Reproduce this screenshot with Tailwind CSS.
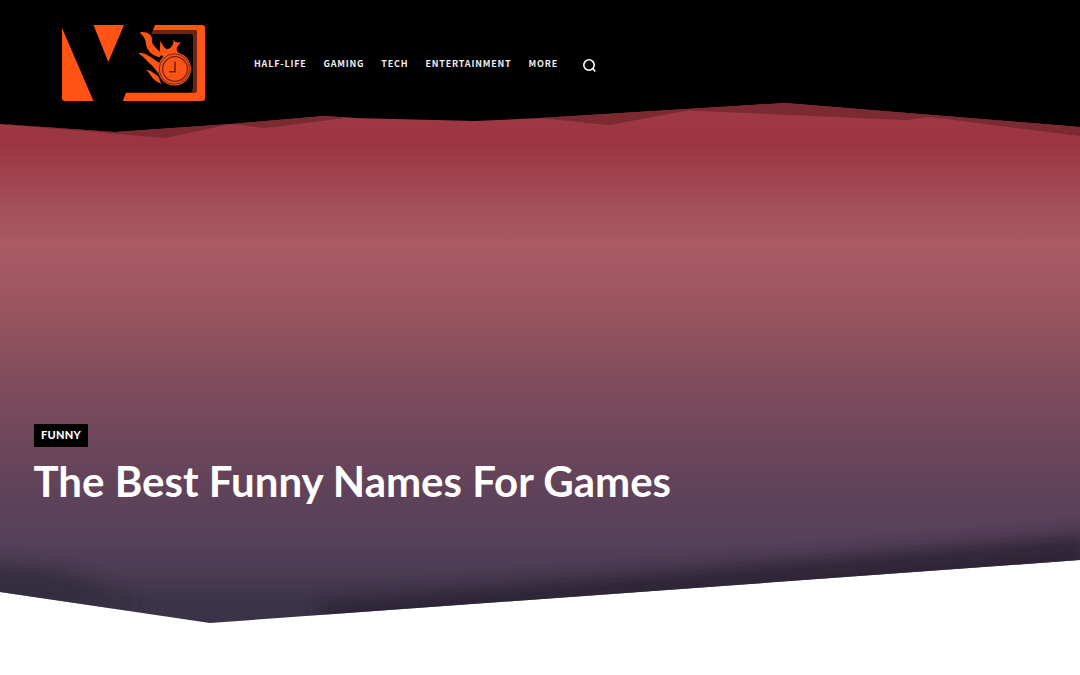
<!DOCTYPE html>
<html lang="en">
  <head>
    <meta charset="UTF-8" />
    <meta name="viewport" content="width=device-width, initial-scale=1.0" />
    <title>The Best Funny Names For Games</title>
    <script src="https://cdn.jsdelivr.net/npm/@tailwindcss/browser@4"></script>
  </head>

  <body class="bg-white h-[675px] overflow-hidden font-['Lato',sans-serif]">
    <!-- header -->
    <header class="bg-black h-[100px] flex items-start pl-[61px]">
      <a href="#" class="block mt-[25px] w-[144px] h-[76px] shrink-0 relative z-10">
        <svg viewBox="61 25 144 76" width="144" height="76">
          <path d="M62 28 L93.5 101 H65 Q62 101 62 98 Z" fill="#ff5416" />
          <path d="M93.5 25 H124 L108.3 62 Z" fill="#ff5416" />
          <path d="M155 25 H202 Q205 25 205 28 V98 Q205 101 202 101 H122.7 L126 92.7 H194 Q197 92.7 197 89 V33 Q197 30 194 30 H153 Z" fill="#ff5416" />
          <path d="M153 30 H194 Q197 30 197 33 V89 Q197 92 194 92.7 H191 Q193 90 193 87 V37 Q193 34 190 34 H151.4 Z" fill="#6e2412" />
          <g fill="#ff5416" transform="translate(130 20) scale(0.3333)">
            <path d="M28 38 C46 32 66 42 66 58 C62 70 78 86 98 102 L88 112 C66 106 50 92 48 72 C48 58 40 46 28 38 Z" />
            <path d="M25 100 C46 96 60 112 90 130 L84 160 C78 150 68 136 54 126 C46 116 36 108 25 100 Z" />
            <path d="M48 150 C60 148 70 160 84 168 L94 192 C80 186 68 178 62 166 C58 160 54 154 48 150 Z" />
            <path d="M92 62 C96 72 102 84 112 88 C124 84 132 74 130 58 C134 68 144 70 152 65 C150 74 140 78 140 88 C140 94 146 98 150 106 L106 116 C94 106 88 96 90 84 C90 76 90 70 92 62 Z" />
          </g>
          <circle cx="174.5" cy="69" r="16.5" fill="#ff5416" />
          <circle cx="174.5" cy="69" r="15.2" fill="none" stroke="#6e2412" stroke-width="1" />
          <circle cx="175" cy="69" r="12.4" fill="none" stroke="#6e2412" stroke-width="1.3" />
          <path d="M175 61.5 V71.7 H169" fill="none" stroke="#6e2412" stroke-width="1.6" />
        </svg>
      </a>
      <nav class="relative z-10 flex items-center gap-[17px] ml-[49px] mt-[54px] text-[9px] leading-[14px] font-bold tracking-[0.8px] text-[#f3eef0] font-['Noto_Sans_CJK_SC','Noto_Sans',sans-serif]">
        <a href="#">HALF-LIFE</a>
        <a href="#">GAMING</a>
        <a href="#">TECH</a>
        <a href="#">ENTERTAINMENT</a>
        <a href="#">MORE</a>
        <svg class="ml-[7px] mt-[4px]" width="15" height="15" viewBox="0 0 15 15" fill="none" stroke="#fff" stroke-width="1.6">
          <circle cx="7" cy="7" r="5.2" />
          <path d="M10.8 10.6 L13.2 13.6" />
        </svg>
      </nav>
    </header>

    <!-- hero -->
    <section class="relative h-[523px] pt-[324px] px-[34px] bg-[linear-gradient(180deg,#a03c46_0%,#9b3540_8%,#a4505a_21%,#aa5b64_28%,#9c5660_38%,#7a4a5c_57%,#5e4259_76%,#56415a_84%,#4b3c52_90%,#3c3448_96%,#3a3346_100%)] [clip-path:polygon(0_0,100%_0,100%_460px,210px_523px,0_492px)]">
      <!-- ragged top edge -->
      <svg class="absolute left-0 top-0" width="1080" height="60" viewBox="0 100 1080 60">
        <path d="M0 100 H1080 V127 L785 103 L540 118 L475 121 L355 118 L324 116 L231 124 L115 132 L0 124 Z" fill="#000" />
        <path d="M0 124 L115 132 L231 124 L165 138 L83 131 Z M231 124 L324 116 L355 118 L345 118 L265 128 Z M540 118 L785 103 L1080 127 V136 L930 117 L905 120 L688 110.5 L609 125 Z" fill="#7a2a30" />
      </svg>
      <!-- dark band along bottom edge -->
      <svg class="absolute left-0 top-0 pointer-events-none" width="1080" height="523" viewBox="0 0 1080 523">
        <defs>
          <filter id="soft" filterUnits="userSpaceOnUse" x="-60" y="380" width="1200" height="200"><feGaussianBlur stdDeviation="9" /></filter>
        </defs>
        <path d="M320 505 L1090 434 L1090 480 L320 530 Z" fill="#2a2433" opacity="0.85" filter="url(#soft)" />
        <path d="M-20 462 L60 470 L140 505 L-20 505 Z" fill="#2f2a38" opacity="0.7" filter="url(#soft)" />
      </svg>

      <div class="relative flex flex-col items-start">
        <a href="#" class="bg-black rounded-[1px] h-[23px] w-[54px] justify-center flex items-center text-white text-[11px] font-black tracking-[0.3px]">FUNNY</a>
        <h1 class="mt-[6px] -ml-[0.5px] text-white text-[42px] leading-[56px] font-bold">The Best Funny Names For Games</h1>
      </div>
    </section>
  </body>
</html>
